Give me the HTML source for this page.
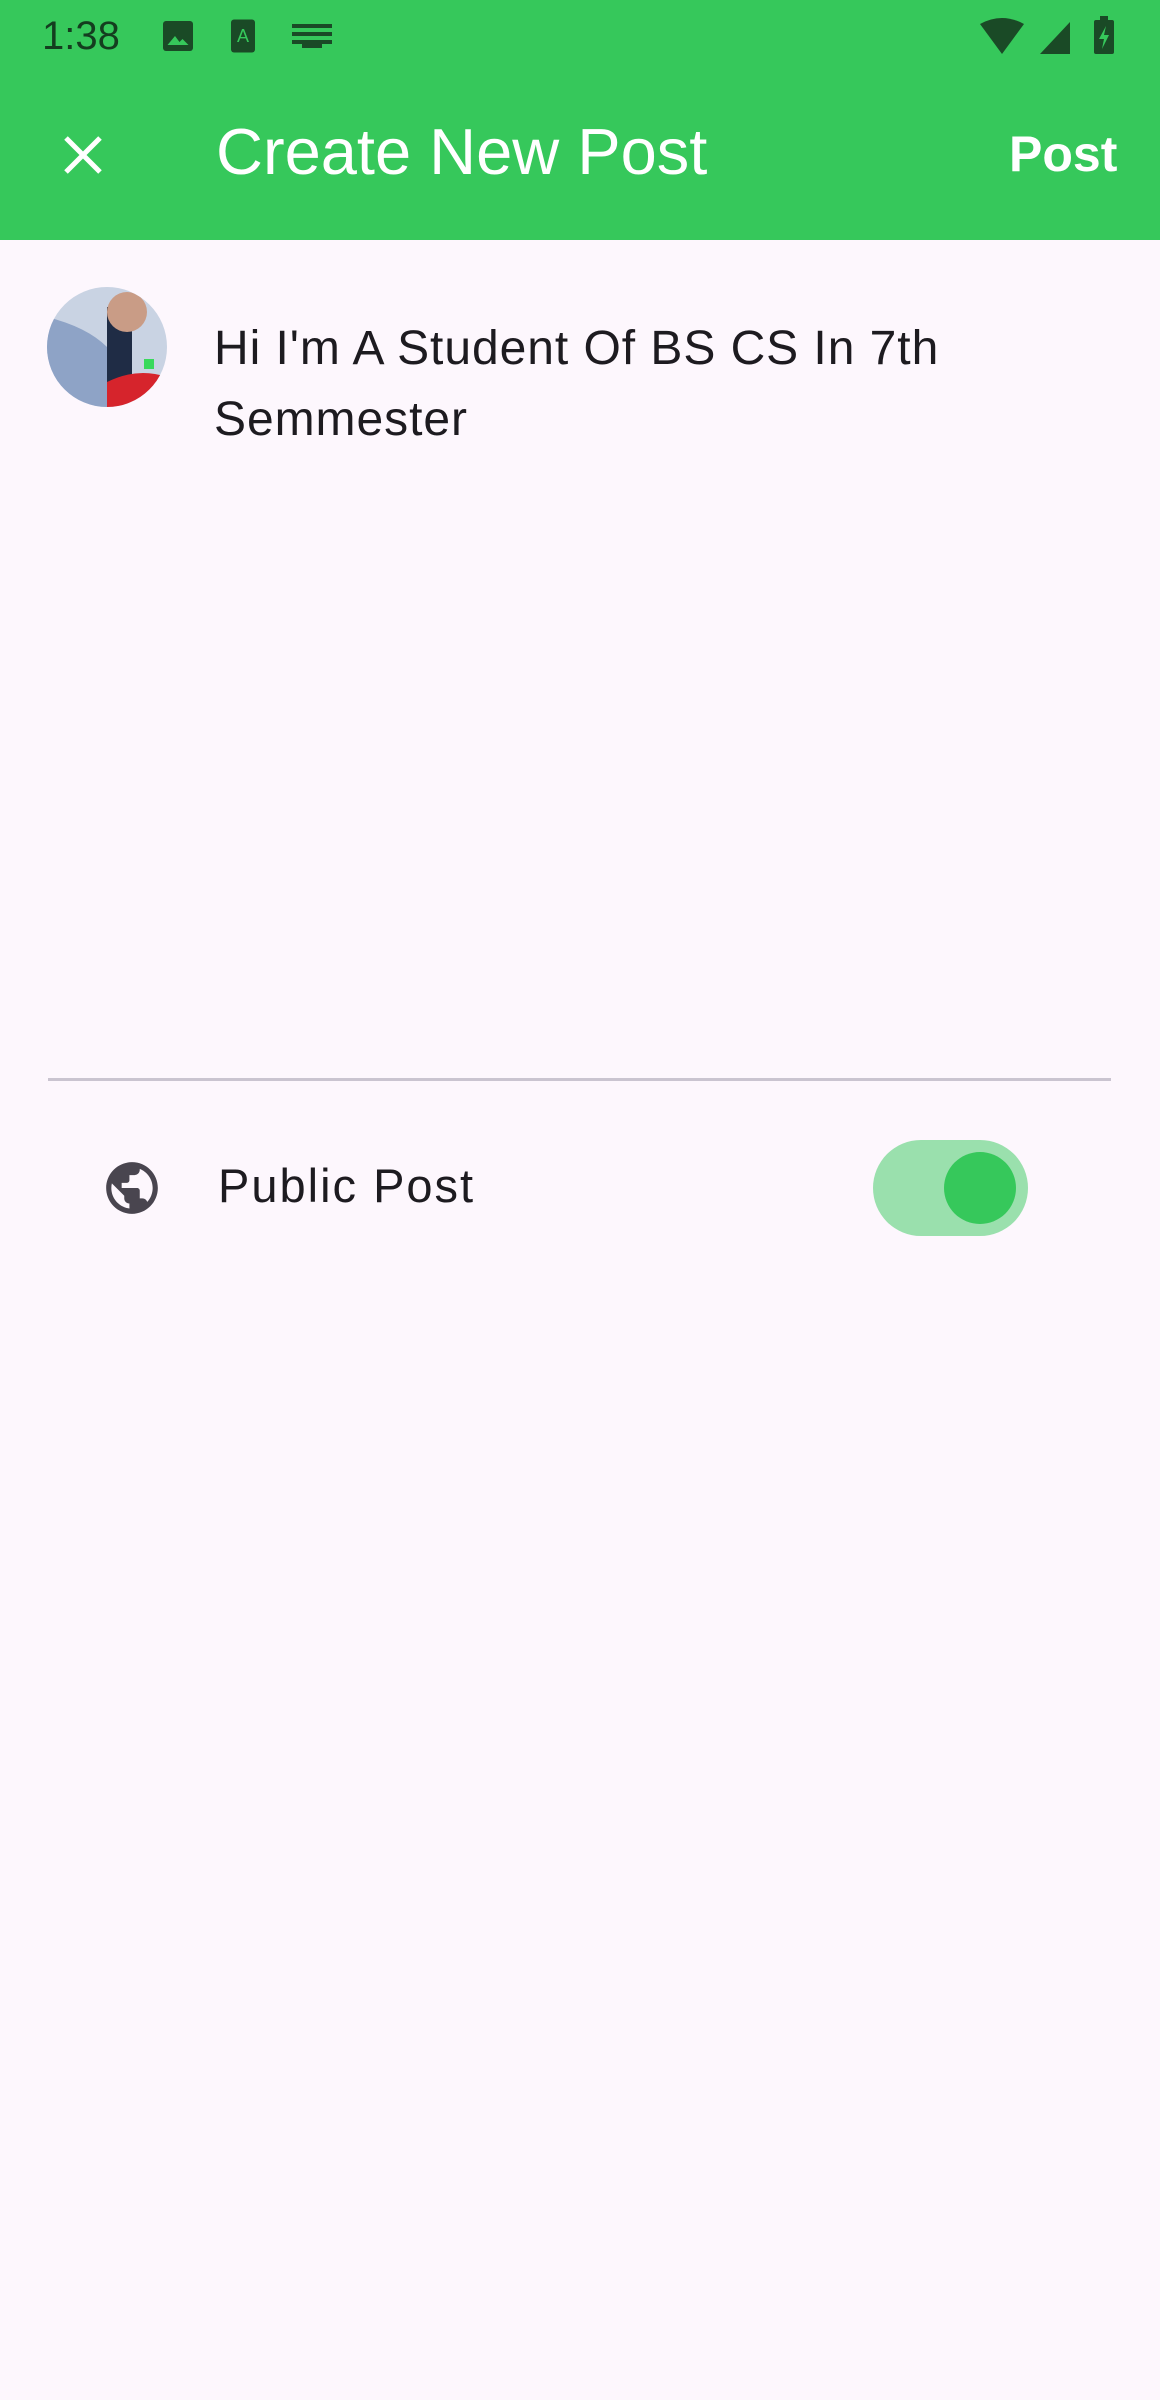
<!DOCTYPE html>
<html><head><meta charset="utf-8"><style>
*{margin:0;padding:0;box-sizing:border-box}
body{width:1160px;height:2400px;background:#fdf7fd;font-family:"Liberation Sans",sans-serif;position:relative;overflow:hidden}
.bar{position:absolute;left:0;top:0;width:1160px;height:240px;background:#36c85b}
.abs{position:absolute;white-space:nowrap}
</style></head><body>
<div class="abs" style="left:0;top:0;width:1160px;height:240px;background:#36c85b"></div>
<div class="abs" style="left:42px;top:12px;font-size:40px;color:#143d1f;line-height:48px">1:38</div>
<svg class="abs" style="left:160px;top:18px" width="36" height="36" viewBox="0 0 24 24"><rect x="2" y="2" width="20" height="20" rx="2" fill="#1a4a26"/><path d="M5 18l5-6 3 4 2-2 4 4z" fill="#36c85b"/></svg>
<svg class="abs" style="left:228px;top:18px" width="30" height="36" viewBox="0 0 20 24"><rect x="2" y="1" width="16" height="22" rx="2" fill="#1a4a26"/><text x="10" y="16" font-size="12" fill="#36c85b" text-anchor="middle" font-family="Liberation Sans">A</text></svg>
<svg class="abs" style="left:292px;top:24px" width="40" height="24" viewBox="0 0 20 12"><g fill="#1a4a26"><rect x="0" y="0" width="20" height="2"/><rect x="0" y="4" width="20" height="2"/><rect x="0" y="8" width="20" height="2"/><rect x="5" y="10" width="10" height="2"/></g></svg>
<svg class="abs" style="left:978px;top:16px" width="140" height="40" viewBox="0 0 140 40"><path d="M2 8 Q24 -4 46 8 L24 38 Z" fill="#1a4a26"/><path d="M62 38 L92 6 L92 38 Z" fill="#1a4a26"/><rect x="116" y="4" width="20" height="34" rx="2" fill="#1a4a26"/><rect x="122" y="0" width="8" height="5" fill="#1a4a26"/><path d="M128 10 L121 23 L126 23 L124 33 L131 19 L126 19 Z" fill="#36c85b"/></svg>
<svg class="abs" style="left:62px;top:134px" width="42" height="42" viewBox="0 0 42 42"><path d="M4 4 L38 38 M38 4 L4 38" stroke="#fff" stroke-width="5"/></svg>
<div class="abs" style="left:216px;top:114px;font-size:65px;color:#fff;line-height:76px">Create New Post</div>
<div class="abs" style="left:1009px;top:124px;font-size:50px;color:#fff;font-weight:bold;line-height:60px">Post</div>
<svg class="abs" style="left:47px;top:287px" width="120" height="120" viewBox="0 0 120 120"><defs><clipPath id="c"><circle cx="60" cy="60" r="60"/></clipPath></defs><g clip-path="url(#c)"><rect width="120" height="120" fill="#c9d3e3"/><path d="M0 30 Q40 40 60 60 L60 120 L0 120Z" fill="#8ea3c6"/><rect x="60" y="20" width="25" height="80" fill="#1f2c45"/><circle cx="80" cy="25" r="20" fill="#c99c86"/><path d="M60 95 Q90 80 120 90 L120 120 L60 120Z" fill="#d6242c"/><rect x="97" y="72" width="10" height="10" fill="#39d95c"/></g></svg>
<div class="abs" style="left:214px;top:313px;font-size:48px;color:#1d1b20;line-height:71px;letter-spacing:0.95px">Hi I'm A Student Of BS CS In 7th<br>Semmester</div>
<div class="abs" style="left:48px;top:1078px;width:1063px;height:3px;background:#cac4d0"></div>
<svg class="abs" style="left:101px;top:1157px" width="62" height="62" viewBox="0 0 24 24"><path fill="#49454f" d="M12 2C6.48 2 2 6.48 2 12s4.480 10 10 10 10-4.48 10-10S17.52 2 12 2zm-1 17.93c-3.95-.49-7-3.85-7-7.93 0-.62.08-1.210.21-1.79L9 15v1c0 1.1.9 2 2 2v1.93zm6.9-2.54c-.26-.81-1-1.39-1.9-1.39h-1v-3c0-.55-.45-1-1-1H8v-2h2c.55 0 1-.45 1-1V7h2c1.1 0 2-.9 2-2v-.41c2.93 1.19 5 4.06 5 7.41 0 2.08-.8 3.97-2.1 5.39z"/></svg>
<div class="abs" style="left:218px;top:1158px;font-size:47px;color:#1d1b20;line-height:56px;letter-spacing:2px">Public Post</div>
<div class="abs" style="left:873px;top:1140px;width:155px;height:96px;border-radius:48px;background:#9ae0ad"></div>
<div class="abs" style="left:944px;top:1152px;width:72px;height:72px;border-radius:50%;background:#36c85b"></div>
</body></html>
